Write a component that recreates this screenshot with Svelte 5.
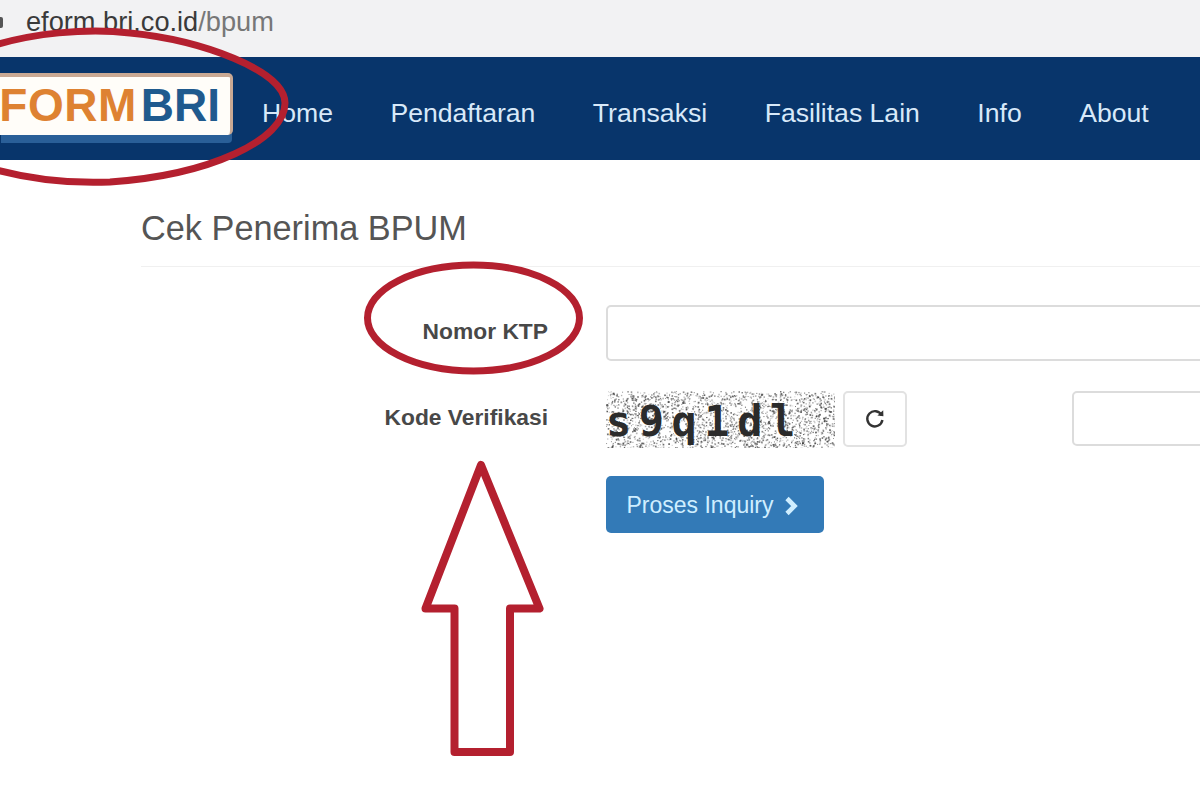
<script>
  const navItems = ['Home', 'Pendaftaran', 'Transaksi', 'Fasilitas Lain', 'Info', 'About'];

  // fixed pseudo random speckle for the captcha
  let seed = 17;
  function rnd() {
    seed = (seed * 16807) % 2147483647;
    return seed / 2147483647;
  }
  const speckle = [];
  for (let i = 0; i < 2300; i++) {
    speckle.push({ x: rnd() * 230, y: rnd() * 57, s: 0.8 + rnd(), o: 0.2 + rnd() * 0.55 });
  }
</script>

<div class="page">
  <div class="addressbar">
    <span class="lock"></span>
    <span class="url">eform.bri.co.id<span class="path">/bpum</span></span>
  </div>

  <nav class="navbar">
    <div class="brand">
      <div class="logo"><span class="orange">FORM</span><span class="blue">BRI</span></div>
    </div>
    <ul class="menu">
      {#each navItems as item}
        <li>{item}</li>
      {/each}
    </ul>
  </nav>

  <main class="content">
    <h1>Cek Penerima BPUM</h1>
    <div class="form">
      <div class="row row-ktp">
        <label class="field-label" for="ktp">Nomor KTP</label>
        <input id="ktp" class="input input-ktp" type="text" />
      </div>
      <div class="row row-captcha">
        <label class="field-label" for="kode">Kode Verifikasi</label>
        <div class="captcha">
          <svg class="noise" width="230" height="57" viewBox="0 0 230 57">
            {#each speckle as d}
              <rect x={d.x} y={d.y} width={d.s} height={d.s} fill="#333" opacity={d.o} />
            {/each}
          </svg>
          <span class="captcha-text">s9q1dl</span>
        </div>
        <button class="refresh" aria-label="Refresh">
          <svg width="24" height="24" viewBox="0 0 24 24" fill="none">
            <path d="M18.6 9.2A7.6 7.6 0 1 0 19.4 14" stroke="#333" stroke-width="2.4" />
            <path d="M14.4 9.6L20.4 10.2L20.2 4.2Z" fill="#333" />
          </svg>
        </button>
        <input id="kode" class="input input-kode" type="text" />
      </div>
      <div class="row row-submit">
        <button class="submit">
          Proses Inquiry
          <svg width="18" height="20" viewBox="0 0 18 20">
            <path d="M5 2.5L12.5 10L5 17.5" fill="none" stroke="#cfeeff" stroke-width="4.6" />
          </svg>
        </button>
      </div>
    </div>
  </main>

  <!-- red marks drawn over the screenshot -->
  <svg class="marks" width="1200" height="800" viewBox="0 0 1200 800" fill="none">
    <path d="M-20 50C30 32 90 28 130 33C200 40 285 70 285 103C285 140 210 175 110 182C60 184 20 178 -20 165"
      stroke="#b4202f" stroke-width="7" />
    <ellipse cx="473.5" cy="318" rx="106" ry="53" stroke="#b4202f" stroke-width="7" />
    <path d="M481 465L539.5 608.5H510V752H454.5V608.5H425.5Z" stroke="#b4202f" stroke-width="8" stroke-linejoin="round" />
  </svg>
</div>

<style>
  :global(body) {
    margin: 0;
    background: #fff;
  }

  .page {
    position: relative;
    width: 1200px;
    height: 800px;
    overflow: hidden;
    font-family: "Liberation Sans", Arial, sans-serif;
  }

  .addressbar {
    height: 57px;
    background: #f2f2f3;
    display: flex;
    align-items: flex-start;
    padding-left: 26px;
    box-sizing: border-box;
    position: relative;
  }
  .lock {
    position: absolute;
    left: -7px;
    top: 17px;
    width: 10px;
    height: 11px;
    background: #555;
    border-radius: 2px;
  }
  .url {
    font-size: 27.2px;
    line-height: 24px;
    margin-top: 10px;
    color: #3a3a3a;
    white-space: nowrap;
  }
  .path { color: #777; }

  .navbar {
    height: 103px;
    background: #08356b;
    display: flex;
    align-items: center;
  }
  .brand {
    width: 262px;
    flex: none;
    height: 100%;
    display: flex;
    align-items: flex-start;
  }
  .logo {
    margin-top: 16px;
    width: 233px;
    height: 62px;
    box-sizing: border-box;
    background: #fffdf9;
    border: 3px solid #c9a994;
    border-top-width: 4px;
    border-left: none;
    border-bottom: none;
    border-radius: 0 5px 5px 0;
    box-shadow: 0 9px 0 -1px #2a5f98;
    font-size: 46px;
    line-height: 56px;
    font-weight: 700;
    white-space: nowrap;
    display: flex;
    justify-content: flex-end;
    padding-right: 10px;
    overflow: hidden;
  }
  .orange {
    color: #de8232;
    letter-spacing: 0.5px;
  }
  .blue {
    color: #1f5a8e;
    margin-left: 4px;
  }

  .menu {
    list-style: none;
    margin: 9px 0 0;
    padding: 0;
    display: flex;
    gap: 57.5px;
    color: #d8e9f9;
    font-size: 26.6px;
    white-space: nowrap;
  }

  .content {
    padding: 49px 0 0 141px;
  }
  h1 {
    margin: 0;
    font-size: 34.3px;
    line-height: 38px;
    font-weight: 400;
    color: #555;
    padding-bottom: 19px;
    border-bottom: 1px solid #f0f0f0;
  }

  .form {
    margin-top: 38px;
  }
  .row {
    display: flex;
    align-items: flex-start;
  }
  .field-label {
    width: 407px;
    flex: none;
    text-align: right;
    font-size: 22.8px;
    font-weight: 700;
    color: #484848;
    line-height: 26px;
  }
  .row-ktp { height: 86px; }
  .row-ktp .field-label { margin-top: 13px; }
  .row-captcha { height: 85px; }
  .row-captcha .field-label { margin-top: 13px; }
  .input {
    box-sizing: border-box;
    border: 2px solid #dcdcdc;
    border-radius: 5px;
    background: #fff;
    outline: none;
    flex: none;
  }
  .input-ktp {
    width: 660px;
    height: 56px;
    margin-left: 58px;
  }
  .captcha {
    position: relative;
    width: 229px;
    height: 57px;
    margin-left: 58px;
    flex: none;
    overflow: hidden;
  }
  .noise { display: block; }
  .captcha-text {
    position: absolute;
    left: 0;
    top: 5px;
    font-family: "DejaVu Sans Mono", monospace;
    font-size: 42px;
    line-height: 52px;
    letter-spacing: 7.5px;
    font-weight: 700;
    color: #2b2b2b;
    white-space: nowrap;
  }
  .refresh {
    width: 64px;
    height: 56px;
    flex: none;
    margin-left: 8px;
    padding: 0 0 2px;
    background: #fff;
    border: 2px solid #e2e2e2;
    border-radius: 5px;
    display: flex;
    align-items: center;
    justify-content: center;
  }
  .input-kode {
    width: 200px;
    height: 55px;
    margin-left: 165px;
  }
  .row-submit { padding-left: 465px; }
  .submit {
    width: 218px;
    height: 57px;
    background: #337ab7;
    border: none;
    border-radius: 5px;
    color: #cfeeff;
    font-family: inherit;
    font-size: 23px;
    display: flex;
    align-items: center;
    justify-content: center;
    gap: 8px;
    padding: 2px 4px 0 0;
  }

  .marks {
    position: absolute;
    left: 0;
    top: 0;
    pointer-events: none;
  }
</style>
